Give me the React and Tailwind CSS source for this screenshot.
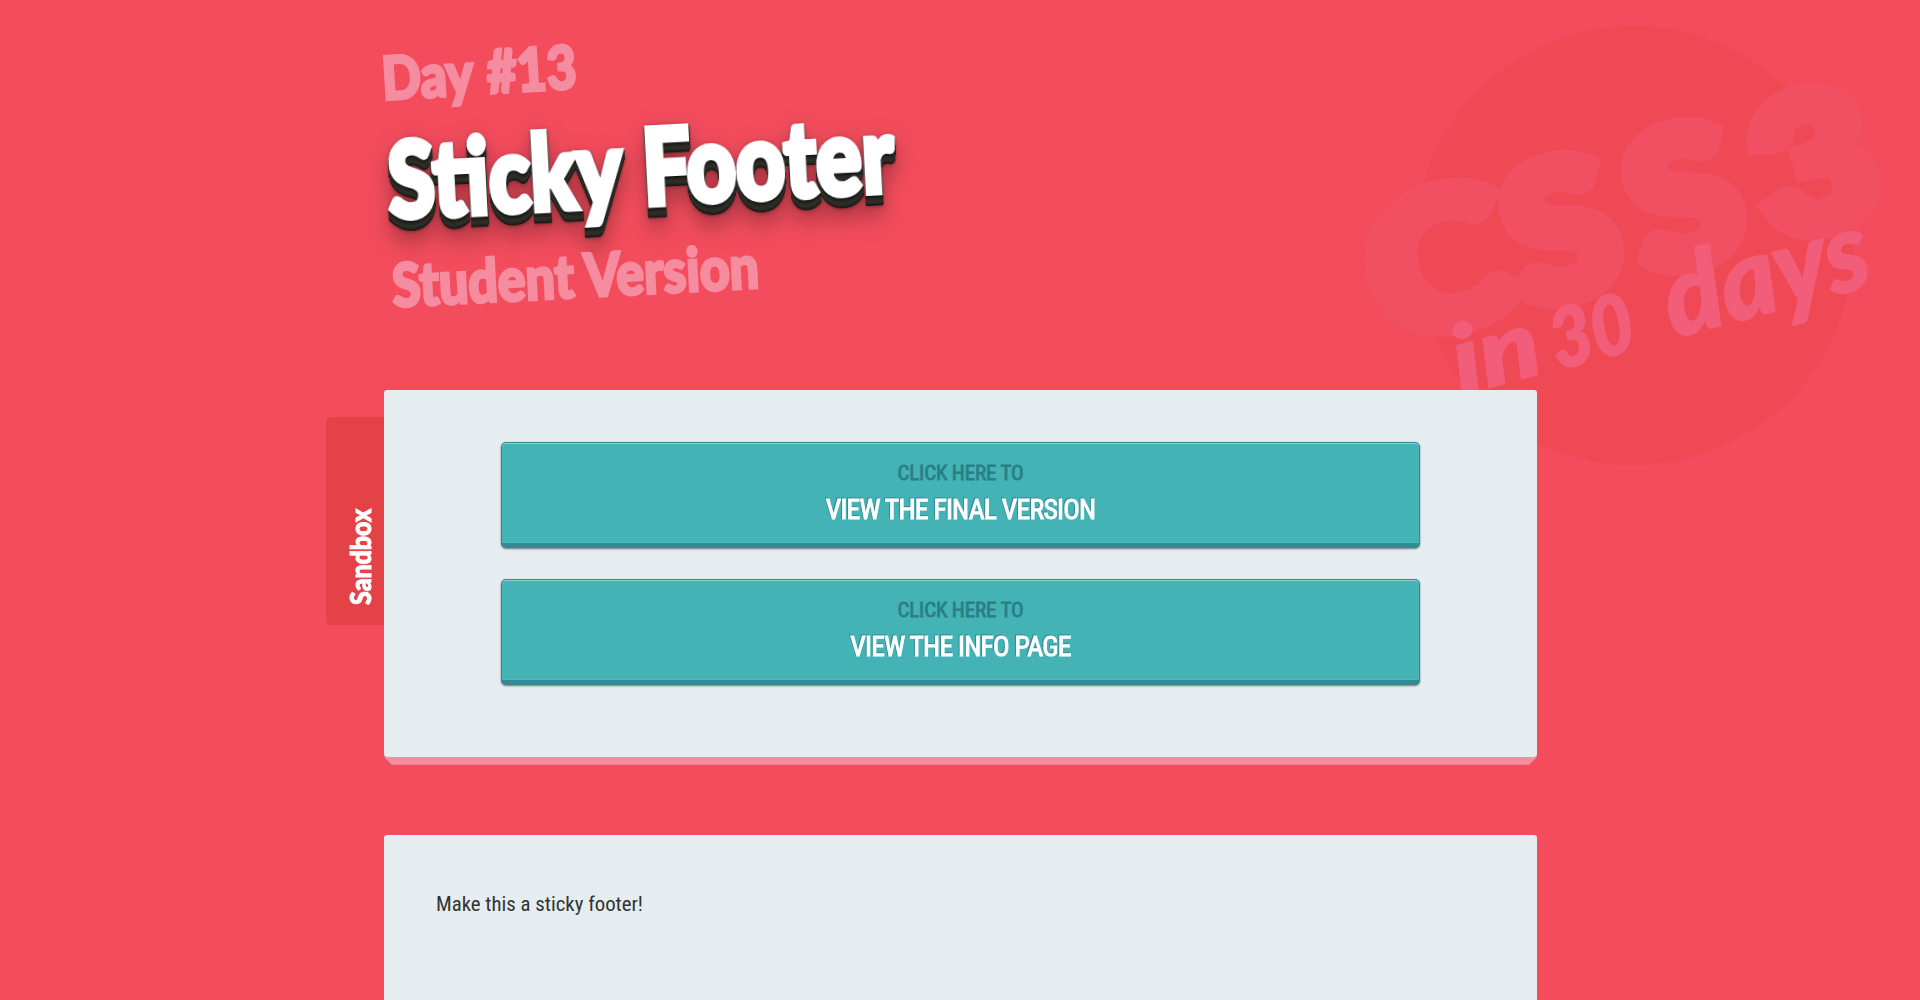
const condensed = "font-['Roboto_Condensed',Roboto,sans-serif] [font-stretch:75%]";

function Badge() {
  const big = [
    { ch: "C", x: 1438, y: 261, sx: 1.14 },
    { ch: "S", x: 1560, y: 230, sx: 1.06 },
    { ch: "S", x: 1683, y: 197, sx: 1.06 },
    { ch: "3", x: 1813, y: 162, sx: 1.1 },
  ];
  return (
    <svg
      className="pointer-events-none absolute right-0 top-0 h-[500px] w-[580px]"
      viewBox="1340 0 580 500"
      fontFamily="Lato, sans-serif"
      fontWeight="900"
    >
      <circle cx="1633.5" cy="245.5" r="219.5" fill="#ef4955" />
      <g fill="#f15063" stroke="#f15063" strokeWidth="19" fontSize="186" textAnchor="middle">
        {big.map((l, i) => (
          <text key={i} transform={`translate(${l.x} ${l.y}) rotate(-15) scale(${l.sx} 1)`} x="0" y="67">
            {l.ch}
          </text>
        ))}
      </g>
      <g fill="#f25d7a" stroke="#f25d7a" strokeWidth="2" strokeLinejoin="round" fontStyle="italic">
        <text transform="translate(1461 395) rotate(-15)" fontSize="94" textLength="88" lengthAdjust="spacingAndGlyphs">in</text>
        <text transform="translate(1558 370) rotate(-15)" fontSize="82" textLength="84" lengthAdjust="spacingAndGlyphs">30</text>
        <text transform="translate(1674 338) rotate(-15)" fontSize="110" textLength="209" lengthAdjust="spacingAndGlyphs">days</text>
      </g>
    </svg>
  );
}

function Button({ children }) {
  return (
    <a
      href="#"
      className={`${condensed} flex h-[106px] flex-col items-center rounded-[5px] border border-b-[5px] border-[#338a94] bg-[#43b3b6] pt-[13px] uppercase shadow-[inset_0_1px_0_#84d3d6,inset_0_-1px_0_#4bbabb,0_1px_2px_rgba(0,0,0,0.5)]`}
    >
      <span className="text-[21px] leading-[34px] tracking-[-0.15px] text-[#2a7f84] [-webkit-text-stroke:0.8px_#2a7f84]">Click here to</span>
      <span className="mt-px text-[27.5px] leading-[38px] tracking-[-0.7px] text-white [-webkit-text-stroke:1px_white] [paint-order:stroke_fill] [filter:drop-shadow(-1px_-1px_0_#338a94)]">{children}</span>
    </a>
  );
}

const subtitle =
  "w-max origin-bottom-left text-[60px] text-[#f58ca0] [-webkit-text-stroke:3px_#f58ca0] [paint-order:stroke_fill] [stroke-linejoin:round]";

export default function App() {
  return (
    <div className="relative h-[1000px] overflow-hidden bg-[#f34c5c]">
      <Badge />
      <main className="relative ml-[384px] w-[1153px]">
        <header className="h-[390px] font-[Lato,sans-serif] font-black whitespace-nowrap">
          <h2 className={`${subtitle} -ml-[1px] h-[102px] pt-[37px] leading-[80px] [word-spacing:3px] [transform:rotate(-3.5deg)_scaleX(0.86)]`}>
            Day #13
          </h2>
          <h1 className="ml-[7px] h-[140px] w-max origin-bottom-left text-[105px] leading-[150px] text-white [word-spacing:3px] [transform:rotate(-3deg)_scaleX(0.812)] [-webkit-text-stroke:6px_white] [paint-order:stroke_fill] [stroke-linejoin:round] [filter:drop-shadow(0_1px_0_#141411)_drop-shadow(0_1px_0_#1c1c18)_drop-shadow(0_1px_0_#24241f)_drop-shadow(0_1px_0_#282823)_drop-shadow(0_1px_0_#2c2c27)_drop-shadow(0_1px_0_#30302b)_drop-shadow(0_1px_0_#2c2c27)_drop-shadow(0_1px_0_#282823)_drop-shadow(0_1px_0_#20201c)_drop-shadow(0_1px_0_#141411)_drop-shadow(0_1px_2px_rgba(0,0,0,0.3))_drop-shadow(0_10px_12px_rgba(0,0,0,0.3))]">
            Sticky Footer
          </h1>
          <h2 className={`${subtitle} ml-[10px] h-[80px] leading-[85px] [transform:rotate(-3deg)_scaleX(0.862)]`}>
            Student Version
          </h2>
        </header>

        <section className="relative h-[367px] rounded-[3px] bg-[#e5edf0] px-[117px] pt-[52px]">
          <div className="absolute right-full top-[27px] flex h-[208px] w-[58px] items-end justify-center rounded-l-[5px] bg-[#e34247] pb-[12px] pl-[10px]">
            <span className="origin-center rotate-180 scale-y-[0.86] font-[Lato,sans-serif] text-[29px] leading-[34px] font-black text-white [writing-mode:vertical-rl] [-webkit-text-stroke:1px_white]">
              Sandbox
            </span>
          </div>
          <div className="flex flex-col gap-[31px]">
            <Button>View the final version</Button>
            <Button>View the info page</Button>
          </div>
          <div className="absolute inset-x-0 top-full h-2 border-b border-[#f37d90] bg-[#f58ca0] [clip-path:polygon(0_0,100%_0,calc(100%-8px)_100%,8px_100%)]" />
        </section>

        <section className="mt-[78px] h-[240px] rounded-[3px] bg-[#e5edf0] px-[52px] pt-[52px]">
          <p className={`${condensed} text-[20.8px] leading-[34px] text-[#333]`}>Make this a sticky footer!</p>
        </section>
      </main>
    </div>
  );
}
